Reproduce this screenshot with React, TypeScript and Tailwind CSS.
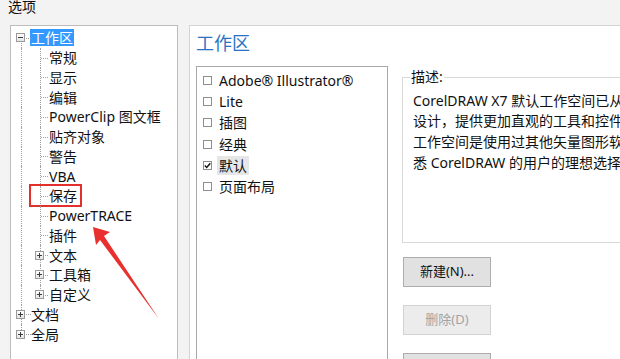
import type { FC } from "react";

type TreeNode = {
  label: string;
  level: 0 | 1;
  expander?: "plus" | "minus";
  selected?: boolean;
  marked?: boolean;
};

const treeItems: TreeNode[] = [
  { label: "工作区", level: 0, expander: "minus", selected: true },
  { label: "常规", level: 1 },
  { label: "显示", level: 1 },
  { label: "编辑", level: 1 },
  { label: "PowerClip 图文框", level: 1 },
  { label: "贴齐对象", level: 1 },
  { label: "警告", level: 1 },
  { label: "VBA", level: 1 },
  { label: "保存", level: 1, marked: true },
  { label: "PowerTRACE", level: 1 },
  { label: "插件", level: 1 },
  { label: "文本", level: 1, expander: "plus" },
  { label: "工具箱", level: 1, expander: "plus" },
  { label: "自定义", level: 1, expander: "plus" },
  { label: "文档", level: 0, expander: "plus" },
  { label: "全局", level: 0, expander: "plus" },
];

const workspaces = [
  { name: "Adobe® Illustrator®", checked: false },
  { name: "Lite", checked: false },
  { name: "插图", checked: false },
  { name: "经典", checked: false },
  { name: "默认", checked: true },
  { name: "页面布局", checked: false },
];

const description = [
  "CorelDRAW X7 默认工作空间已从头开始重新",
  "设计，提供更加直观的工具和控件布局。此",
  "工作空间是使用过其他矢量图形软件并熟",
  "悉 CorelDRAW 的用户的理想选择。",
];

const ExpandBox: FC<{ kind: "plus" | "minus" }> = ({ kind }) => (
  <span className="relative z-10 flex h-[9px] w-[9px] items-center justify-center border border-[#9a9a9a] bg-linear-to-b from-white to-[#e4e4e4]">
    <span className="h-px w-[5px] bg-[#3c3c3c]" />
    {kind === "plus" && <span className="absolute h-[5px] w-px bg-[#3c3c3c]" />}
  </span>
);

const TreeRow: FC<{ node: TreeNode; index: number }> = ({ node, index }) => {
  const last = treeItems.length - 1;
  const lastChild = 13;
  return (
    <div className="relative flex h-[19.75px] items-center">
      {/* root guide column */}
      <div className="relative flex h-full w-[20px] shrink-0 items-center">
        {index > 0 && (
          <span
            className={`absolute left-[10px] top-0 border-l border-dotted border-[#a0a0a0] ${
              node.level === 0 ? "h-1/2" : "h-full"
            }`}
          />
        )}
        {node.level === 0 && index !== last && (
          <span className="absolute left-[10px] top-1/2 h-1/2 border-l border-dotted border-[#a0a0a0]" />
        )}
        {node.level === 0 && node.expander && (
          <>
            <span className="absolute left-[15px] top-1/2 w-[5px] border-t border-dotted border-[#a0a0a0]" />
            <span className="ml-[5px]">
              <ExpandBox kind={node.expander} />
            </span>
          </>
        )}
      </div>
      {/* child guide column */}
      {node.level === 1 && (
        <div className="relative flex h-full w-[18px] shrink-0 items-center">
          <span
            className={`absolute left-[9px] top-0 border-l border-dotted border-[#a0a0a0] ${
              index === lastChild ? "h-1/2" : "h-full"
            }`}
          />
          <span className="absolute left-[10px] top-1/2 w-[7px] border-t border-dotted border-[#a0a0a0]" />
          {node.expander && (
            <span className="ml-[4px]">
              <ExpandBox kind={node.expander} />
            </span>
          )}
        </div>
      )}
      <span
        className={`whitespace-nowrap text-[14px] leading-[17px] ${
          node.selected ? "-ml-px bg-[#3399ff] px-px text-white" : "text-[#111]"
        }`}
      >
        {node.label}
      </span>
      {node.marked && (
        <span className="absolute left-[18px] top-[-2px] h-[23px] w-[53px] border-2 border-[#e3302d]" />
      )}
    </div>
  );
};

const CheckBox: FC<{ checked: boolean }> = ({ checked }) => (
  <span className="flex h-[9px] w-[9px] shrink-0 items-center justify-center border border-[#8e8e8e] bg-white">
    {checked && (
      <svg width="7" height="7" viewBox="0 0 7 7">
        <path d="M0.8 3.6 L2.7 5.5 L6.3 1.2" fill="none" stroke="#111" strokeWidth="1.4" />
      </svg>
    )}
  </span>
);

const App: FC = () => {
  return (
    <div className="relative flex h-[359px] w-[620px] flex-col overflow-hidden bg-[#f3f3f3] font-['Noto_Sans','Noto_Sans_CJK_SC',sans-serif]">
      <div className="h-[25px] shrink-0 pl-[8px] text-[14px] leading-[14px] text-[#111]">选项</div>

      <div className="flex min-h-0 flex-1">
        <div className="ml-[10px] w-[168px] shrink-0 border border-b-0 border-[#bdbdbd] bg-white pt-[2px]">
          {treeItems.map((node, i) => (
            <TreeRow key={node.label} node={node} index={i} />
          ))}
        </div>

        <div className="ml-[11px] flex min-w-0 flex-1 flex-col overflow-hidden border-l border-t border-[#d4d4d4] bg-white pl-[6px]">
          <div className="shrink-0 pt-[5px] text-[18px] leading-[24px] text-[#2a72c3]">工作区</div>

          <div className="mt-[11px] flex min-h-0 flex-1">
            <div className="w-[192px] shrink-0 border border-b-0 border-[#a9a9a9] pt-[3px]">
              {workspaces.map((w) => (
                <div key={w.name} className="flex h-[21.2px] items-center pl-[6px]">
                  <CheckBox checked={w.checked} />
                  <span
                    className={`ml-[5px] whitespace-nowrap px-[2px] text-[14px] leading-[19px] text-[#111] ${
                      w.checked ? "bg-[#e6e6e6]" : ""
                    }`}
                  >
                    {w.name}
                  </span>
                </div>
              ))}
            </div>

            <div className="ml-[14px] flex shrink-0 flex-col pt-[11px]">
              <div className="relative h-[166px] w-[260px] shrink-0 border border-[#d9d9d9] pl-[10px] pt-[12.5px]">
                <span className="absolute left-[7px] top-[-10px] bg-white px-px text-[14px] leading-[18px] text-[#111]">
                  描述:
                </span>
                <div className="text-[14px] leading-[20.7px] text-[#111]">
                  {description.map((line) => (
                    <div key={line} className="whitespace-nowrap">
                      {line}
                    </div>
                  ))}
                </div>
              </div>

              <div className="ml-px mt-[14px] flex shrink-0 flex-col gap-[18px]">
                <button className="h-[30px] w-[88px] shrink-0 border border-[#adadad] bg-[#e1e1e1] text-[13px] text-[#111]">
                  新建(N)...
                </button>
                <button className="h-[30px] w-[88px] shrink-0 border border-[#d2d2d2] bg-[#ececec] text-[13px] text-[#a3a3a3]">
                  删除(D)
                </button>
                <button className="h-[30px] w-[88px] shrink-0 border border-[#adadad] bg-[#e1e1e1] text-[13px] text-[#111]">
                  导入(I)...
                </button>
              </div>
            </div>
          </div>
        </div>
      </div>

      <svg className="pointer-events-none absolute left-0 top-0" width="620" height="359" viewBox="0 0 620 359">
        <polygon points="93,227 110,232 104,236 159,319 100,240 96,245" fill="#e8312f" />
      </svg>
    </div>
  );
};

export default App;
